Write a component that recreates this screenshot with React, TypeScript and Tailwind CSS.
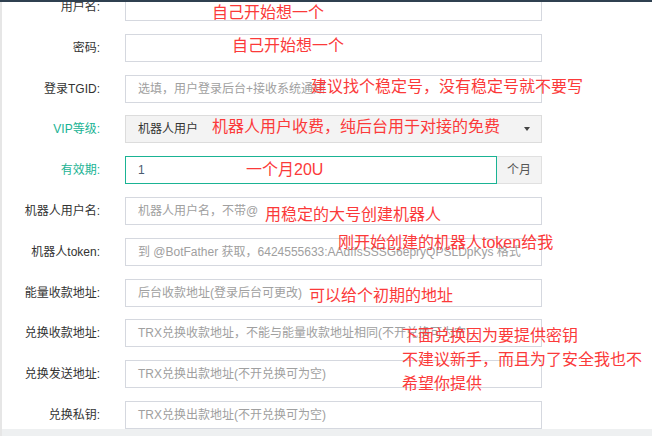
import { ReactNode } from 'react';

const FONT = "font-['Liberation_Sans','Noto_Sans_CJK_SC',sans-serif]";

type Row = {
  label: string;
  teal?: boolean;
  kind?: 'select' | 'unit' | 'text';
  value?: string;
  placeholder?: string;
};

const rows: Row[] = [
  { label: '用户名:' },
  { label: '密码:' },
  { label: '登录TGID:', placeholder: '选填，用户登录后台+接收系统通知' },
  { label: 'VIP等级:', teal: true, kind: 'select', value: '机器人用户' },
  { label: '有效期:', teal: true, kind: 'unit', value: '1' },
  { label: '机器人用户名:', placeholder: '机器人用户名，不带@' },
  { label: '机器人token:', placeholder: '到 @BotFather 获取，6424555633:AAdffsSSSG6epryQPSLDpKys 格式' },
  { label: '能量收款地址:', placeholder: '后台收款地址(登录后台可更改)' },
  { label: '兑换收款地址:', placeholder: 'TRX兑换收款地址，不能与能量收款地址相同(不开兑换可为空)' },
  { label: '兑换发送地址:', placeholder: 'TRX兑换出款地址(不开兑换可为空)' },
  { label: '兑换私钥:', placeholder: 'TRX兑换出款地址(不开兑换可为空)' },
];

const notes: { x: number; y: number; text: ReactNode }[] = [
  { x: 212, y: 5, text: '自己开始想一个' },
  { x: 232, y: 38, text: '自己开始想一个' },
  { x: 311, y: 79, text: '建议找个稳定号，没有稳定号就不要写' },
  { x: 212, y: 119, text: '机器人用户收费，纯后台用于对接的免费' },
  { x: 246, y: 162, text: '一个月20U' },
  { x: 265, y: 207, text: '用稳定的大号创建机器人' },
  { x: 338, y: 235, text: '刚开始创建的机器人token给我' },
  { x: 309, y: 288, text: '可以给个初期的地址' },
  {
    x: 402,
    y: 328,
    text: (
      <>
        下面兑换因为要提供密钥
        <br />
        不建议新手，而且为了安全我也不
        <br />
        希望你提供
      </>
    ),
  },
];

function Field({ row }: { row: Row }) {
  if (row.kind === 'select') {
    return (
      <div className="flex h-full w-[417px] items-center justify-between border border-[#dcdcdc] bg-[#f3f3f3] pl-[12px] pr-[11px] text-[12px] text-[#333]">
        <span>{row.value}</span>
        <span className="h-0 w-0 border-x-[3.5px] border-t-[4px] border-x-transparent border-t-[#444]" />
      </div>
    );
  }
  if (row.kind === 'unit') {
    return (
      <div className="flex h-full w-[417px]">
        <div className="flex flex-1 items-center border border-[#1ab394] pl-[12px] text-[12px] text-[#4a5a70]">
          {row.value}
        </div>
        <div className="flex w-[45px] items-center justify-center border border-l-0 border-[#e0e0e0] bg-[#f3f3f3] text-[12px] text-[#555]">
          个月
        </div>
      </div>
    );
  }
  return (
    <div className="flex h-full w-[417px] items-center overflow-hidden whitespace-nowrap border border-[#d5d8df] bg-white pl-[12px] text-[12px] text-[#a0a0a0]">
      {row.placeholder}
    </div>
  );
}

export default function App() {
  return (
    <div className={`relative h-[436px] w-[652px] overflow-hidden bg-white ${FONT}`}>
      <div className="absolute left-0 top-0 z-10 h-[2px] w-full bg-[#2f4050]" />
      <div className="flex h-full">
        <div className="w-[2px] bg-[#e6e6e6]" />
        <div className="flex flex-1 flex-col">
          <div className="-mt-[7px] flex flex-col gap-[12.8px]">
            {rows.map((row) => (
              <div key={row.label} className="flex h-[28px] items-center">
                <div
                  className={`w-[99px] pr-[1px] text-right text-[12px] ${
                    row.teal ? 'text-[#1ab394]' : 'text-[#333]'
                  }`}
                >
                  {row.label}
                </div>
                <div className="ml-[24px] h-full">
                  <Field row={row} />
                </div>
              </div>
            ))}
          </div>
          <div className="mt-auto h-[7px] bg-[#eef0f1]" />
        </div>
      </div>
      {notes.map((n, i) => (
        <div
          key={i}
          className="pointer-events-none absolute whitespace-nowrap text-[16px] leading-[24px] text-[#fb3a3a]"
          style={{ left: n.x, top: n.y - 4 }}
        >
          {n.text}
        </div>
      ))}
    </div>
  );
}
